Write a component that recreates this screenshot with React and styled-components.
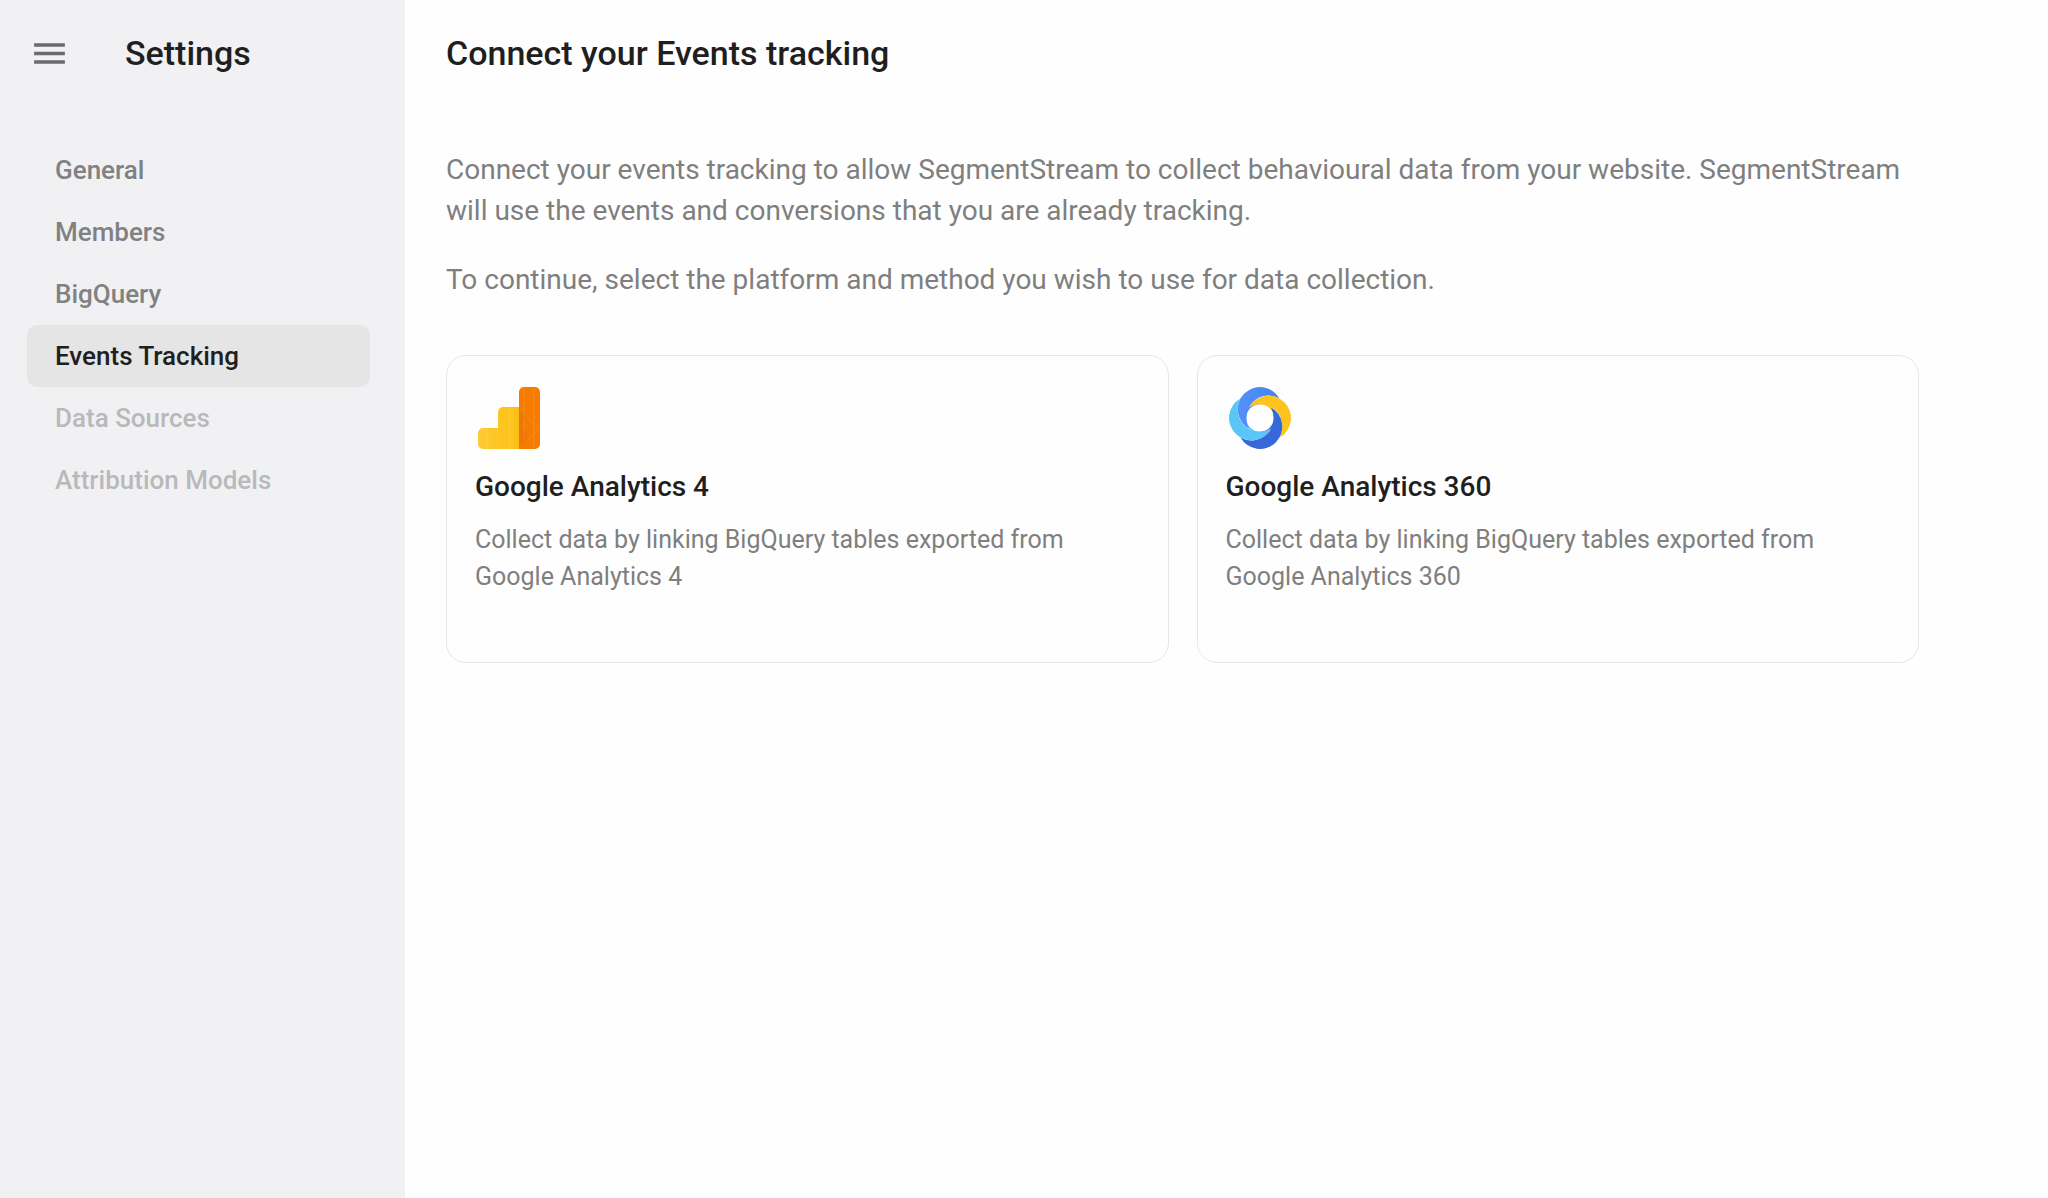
import styled, { createGlobalStyle } from "styled-components";
import { MdMenu } from "react-icons/md";

const GlobalStyle = createGlobalStyle`
  * {
    box-sizing: border-box;
  }
  body {
    margin: 0;
    background-color: #fefefe;
    color: #1f1f1f;
    font-family: Roboto, "Liberation Sans", sans-serif;
  }
`;

const Layout = styled.div`
  display: flex;
  min-height: 100vh;
`;

const Sidebar = styled.aside`
  flex: 0 0 405px;
  background-color: #f1f1f4;
`;

const SidebarHeader = styled.header`
  display: flex;
  align-items: center;
  gap: 55px;
  height: 107px;
  padding-left: 29px;
`;

const MenuButton = styled.button`
  display: flex;
  padding: 0;
  border: none;
  background: none;
  color: #6b6b6d;
  cursor: pointer;
`;

const Title = styled.h1`
  margin: 0;
  font-size: 34px;
  font-weight: 500;
  line-height: 41px;
`;

const Nav = styled.nav`
  display: flex;
  flex-direction: column;
  padding: 32px 35px 0 27px;
`;

const NavLink = styled.a`
  padding: 0 28px;
  border-radius: 10px;
  background-color: ${({ $active }) => ($active ? "#e5e5e5" : "transparent")};
  color: ${({ $active, $disabled }) =>
    $active ? "#1f1f1f" : $disabled ? "#b9b9bb" : "#818182"};
  font-size: 26px;
  font-weight: 500;
  line-height: 62px;
  text-decoration: none;
`;

const Main = styled.main`
  flex: 1;
  min-width: 0;
  padding: 0 129px 40px 41px;
`;

const MainHeader = styled.header`
  display: flex;
  align-items: center;
  height: 107px;
`;

const Intro = styled.div`
  display: flex;
  flex-direction: column;
  gap: 28px;
  padding: 42px 0 55px;
`;

const Text = styled.p`
  margin: 0;
  color: #7f7f7f;
  font-size: 28px;
  line-height: 41px;
`;

const Cards = styled.div`
  display: grid;
  grid-template-columns: 1fr 1fr;
  gap: 28px;
`;

const Card = styled.button`
  display: flex;
  flex-direction: column;
  align-items: flex-start;
  min-height: 308px;
  padding: 28px;
  border: 1px solid #e6e6e6;
  border-radius: 20px;
  background: none;
  color: inherit;
  font-family: inherit;
  text-align: left;
  cursor: pointer;

  svg {
    width: 68px;
    height: 68px;
  }
`;

const CardTitle = styled.span`
  margin-top: 15px;
  font-size: 28px;
  font-weight: 500;
  line-height: 40px;
`;

const CardText = styled.span`
  max-width: 620px;
  margin-top: 14px;
  color: #7f7f7f;
  font-size: 25px;
  line-height: 37px;
`;

function AnalyticsLogo() {
  return (
    <svg viewBox="0 0 68 68" aria-hidden="true">
      <defs>
        <linearGradient id="bars" x1="0" x2="1">
          <stop offset="0" stopColor="#ffca35" />
          <stop offset="1" stopColor="#fdc010" />
        </linearGradient>
      </defs>
      <path
        d="M3 49a5 5 0 0 1 5-5h15V28a5 5 0 0 1 5-5h16v42H8a5 5 0 0 1-5-5z"
        fill="url(#bars)"
      />
      <path
        d="M44 8a5 5 0 0 1 5-5h11a5 5 0 0 1 5 5v52a5 5 0 0 1-5 5H44z"
        fill="#f57c00"
      />
      <path d="M44 25l9 8-7 8 7 10-9 11z" fill="#ea7508" opacity=".7" />
      <path d="M49 5v50M59 4v60M44 25l20 20-11 10" fill="none" stroke="#ff9940" strokeWidth=".6" opacity=".7" />
      <path d="M12 45v20M34 24v41M37 24v41" stroke="#ffd75c" strokeWidth=".6" />
    </svg>
  );
}

// One crescent of the ring, a disc with the next disc cut out of it
const CRESCENT =
  "M58.6 -58.6A67 67 0 1 0 -32.6 32.6A67 67 0 0 1 58.6 -58.6Z";
const CORNER = "M-43.5 0A43.5 43.5 0 0 1 0 -43.5";

const petals = [
  { angle: 0, color: "url(#petal)" },
  { angle: 90, color: "#fec31c" },
  { angle: 180, color: "#3568d8" },
  { angle: 270, color: "#5ac5f7" },
];

function Analytics360Logo() {
  return (
    <svg viewBox="-102 -102 204 204" aria-hidden="true">
      <defs>
        <linearGradient id="petal" x1="0" x2="1">
          <stop offset="0" stopColor="#5590f7" />
          <stop offset="1" stopColor="#4284f3" />
        </linearGradient>
      </defs>
      {petals.map(({ angle, color }) => (
        <path
          key={angle}
          d={CORNER}
          fill="none"
          stroke={color}
          strokeWidth="5"
          transform={`rotate(${angle})`}
        />
      ))}
      {petals.map(({ angle, color }) => (
        <path key={angle} d={CRESCENT} fill={color} transform={`rotate(${angle})`} />
      ))}
    </svg>
  );
}

const links = [
  { label: "General" },
  { label: "Members" },
  { label: "BigQuery" },
  { label: "Events Tracking", active: true },
  { label: "Data Sources", disabled: true },
  { label: "Attribution Models", disabled: true },
];

const platforms = [
  { name: "Google Analytics 4", Logo: AnalyticsLogo },
  { name: "Google Analytics 360", Logo: Analytics360Logo },
];

function App() {
  return (
    <>
      <GlobalStyle />
      <Layout>
        <Sidebar>
          <SidebarHeader>
            <MenuButton aria-label="Menu">
              <MdMenu size={41} />
            </MenuButton>
            <Title as="div">Settings</Title>
          </SidebarHeader>
          <Nav>
            {links.map(({ label, active, disabled }) => (
              <NavLink
                key={label}
                href="#"
                $active={active}
                $disabled={disabled}
                aria-current={active ? "page" : undefined}
                aria-disabled={disabled}
              >
                {label}
              </NavLink>
            ))}
          </Nav>
        </Sidebar>
        <Main>
          <MainHeader>
            <Title>Connect your Events tracking</Title>
          </MainHeader>
          <Intro>
            <Text>
              Connect your events tracking to allow SegmentStream to collect
              behavioural data from your website. SegmentStream will use the
              events and conversions that you are already tracking.
            </Text>
            <Text>
              To continue, select the platform and method you wish to use for
              data collection.
            </Text>
          </Intro>
          <Cards>
            {platforms.map(({ name, Logo }) => (
              <Card key={name}>
                <Logo />
                <CardTitle>{name}</CardTitle>
                <CardText>
                  Collect data by linking BigQuery tables exported from {name}
                </CardText>
              </Card>
            ))}
          </Cards>
        </Main>
      </Layout>
    </>
  );
}

export default App;
